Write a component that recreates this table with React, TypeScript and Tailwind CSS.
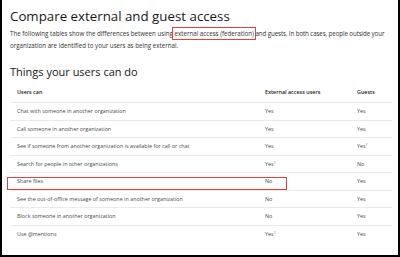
import React from "react";

interface Row {
  action: string;
  external: string;
  externalNote?: boolean;
  guests: string;
  guestsNote?: boolean;
  flagged?: boolean;
}

const rows: Row[] = [
  { action: "Chat with someone in another organization", external: "Yes", guests: "Yes" },
  { action: "Call someone in another organization", external: "Yes", guests: "Yes" },
  {
    action: "See if someone from another organization is available for call or chat",
    external: "Yes",
    guests: "Yes",
    guestsNote: true,
  },
  { action: "Search for people in other organizations", external: "Yes", externalNote: true, guests: "No" },
  { action: "Share files", external: "No", guests: "Yes", flagged: true },
  {
    action: "See the out-of-office message of someone in another organization",
    external: "No",
    guests: "Yes",
  },
  { action: "Block someone in another organization", external: "No", guests: "Yes" },
  { action: "Use @mentions", external: "Yes", externalNote: true, guests: "Yes" },
];

function Cell({ value, note }: { value: string; note?: boolean }) {
  return (
    <span>
      {value}
      {note && <sup className="text-[3.5px]">1</sup>}
    </span>
  );
}

export default function App() {
  return (
    <div
      className="w-[400px] h-[257px] bg-white border-l-2 border-r-2 border-b-2 border-black overflow-hidden pl-[8px] pr-[6px]"
      style={{ fontFamily: '"Open Sans", "Noto Sans", sans-serif' }}
    >
      <h1 className="pt-[6px] text-[13.3px] leading-[20px] text-[#171717] font-normal">
        Compare external and guest access
      </h1>

      <p className="mt-[2px] text-[6.2px] leading-[12px] text-[#333] whitespace-nowrap">
        The following tables show the differences between using{" "}
        <span className="outline outline-[1.5px] outline-[#e5403c] outline-offset-[1.5px]">
          external access (federation)
        </span>{" "}
        <span className="tracking-[-0.1px]">and guests. In both cases, people outside your</span>
        <br />
        organization are identified to your users as being external.
      </p>

      <h2 className="mt-[12px] text-[11px] leading-[16px] text-[#171717] font-normal">
        Things your users can do
      </h2>

      <div className="mt-[3px] text-[5.4px] text-[#4a4a4a]">
        <div className="grid grid-cols-[248px_92px_1fr] h-[19px] items-center font-semibold text-[#222]">
          <div className="pl-[7px]">Users can</div>
          <div className="pl-[7px]">External access users</div>
          <div className="pl-[7px]">Guests</div>
        </div>

        {rows.map((row) => (
          <div
            key={row.action}
            className="relative grid grid-cols-[248px_92px_1fr] h-[17.5px] items-center border-t border-[#ebebeb]"
          >
            <div className="pl-[7px]">{row.action}</div>
            <div className="pl-[7px]">
              <Cell value={row.external} note={row.externalNote} />
            </div>
            <div className="pl-[7px]">
              <Cell value={row.guests} note={row.guestsNote} />
            </div>
            {row.flagged && (
              <div className="absolute left-[-3px] top-[4px] w-[280px] h-[13px] border-[1.5px] border-[#e5403c]" />
            )}
          </div>
        ))}
      </div>
    </div>
  );
}
